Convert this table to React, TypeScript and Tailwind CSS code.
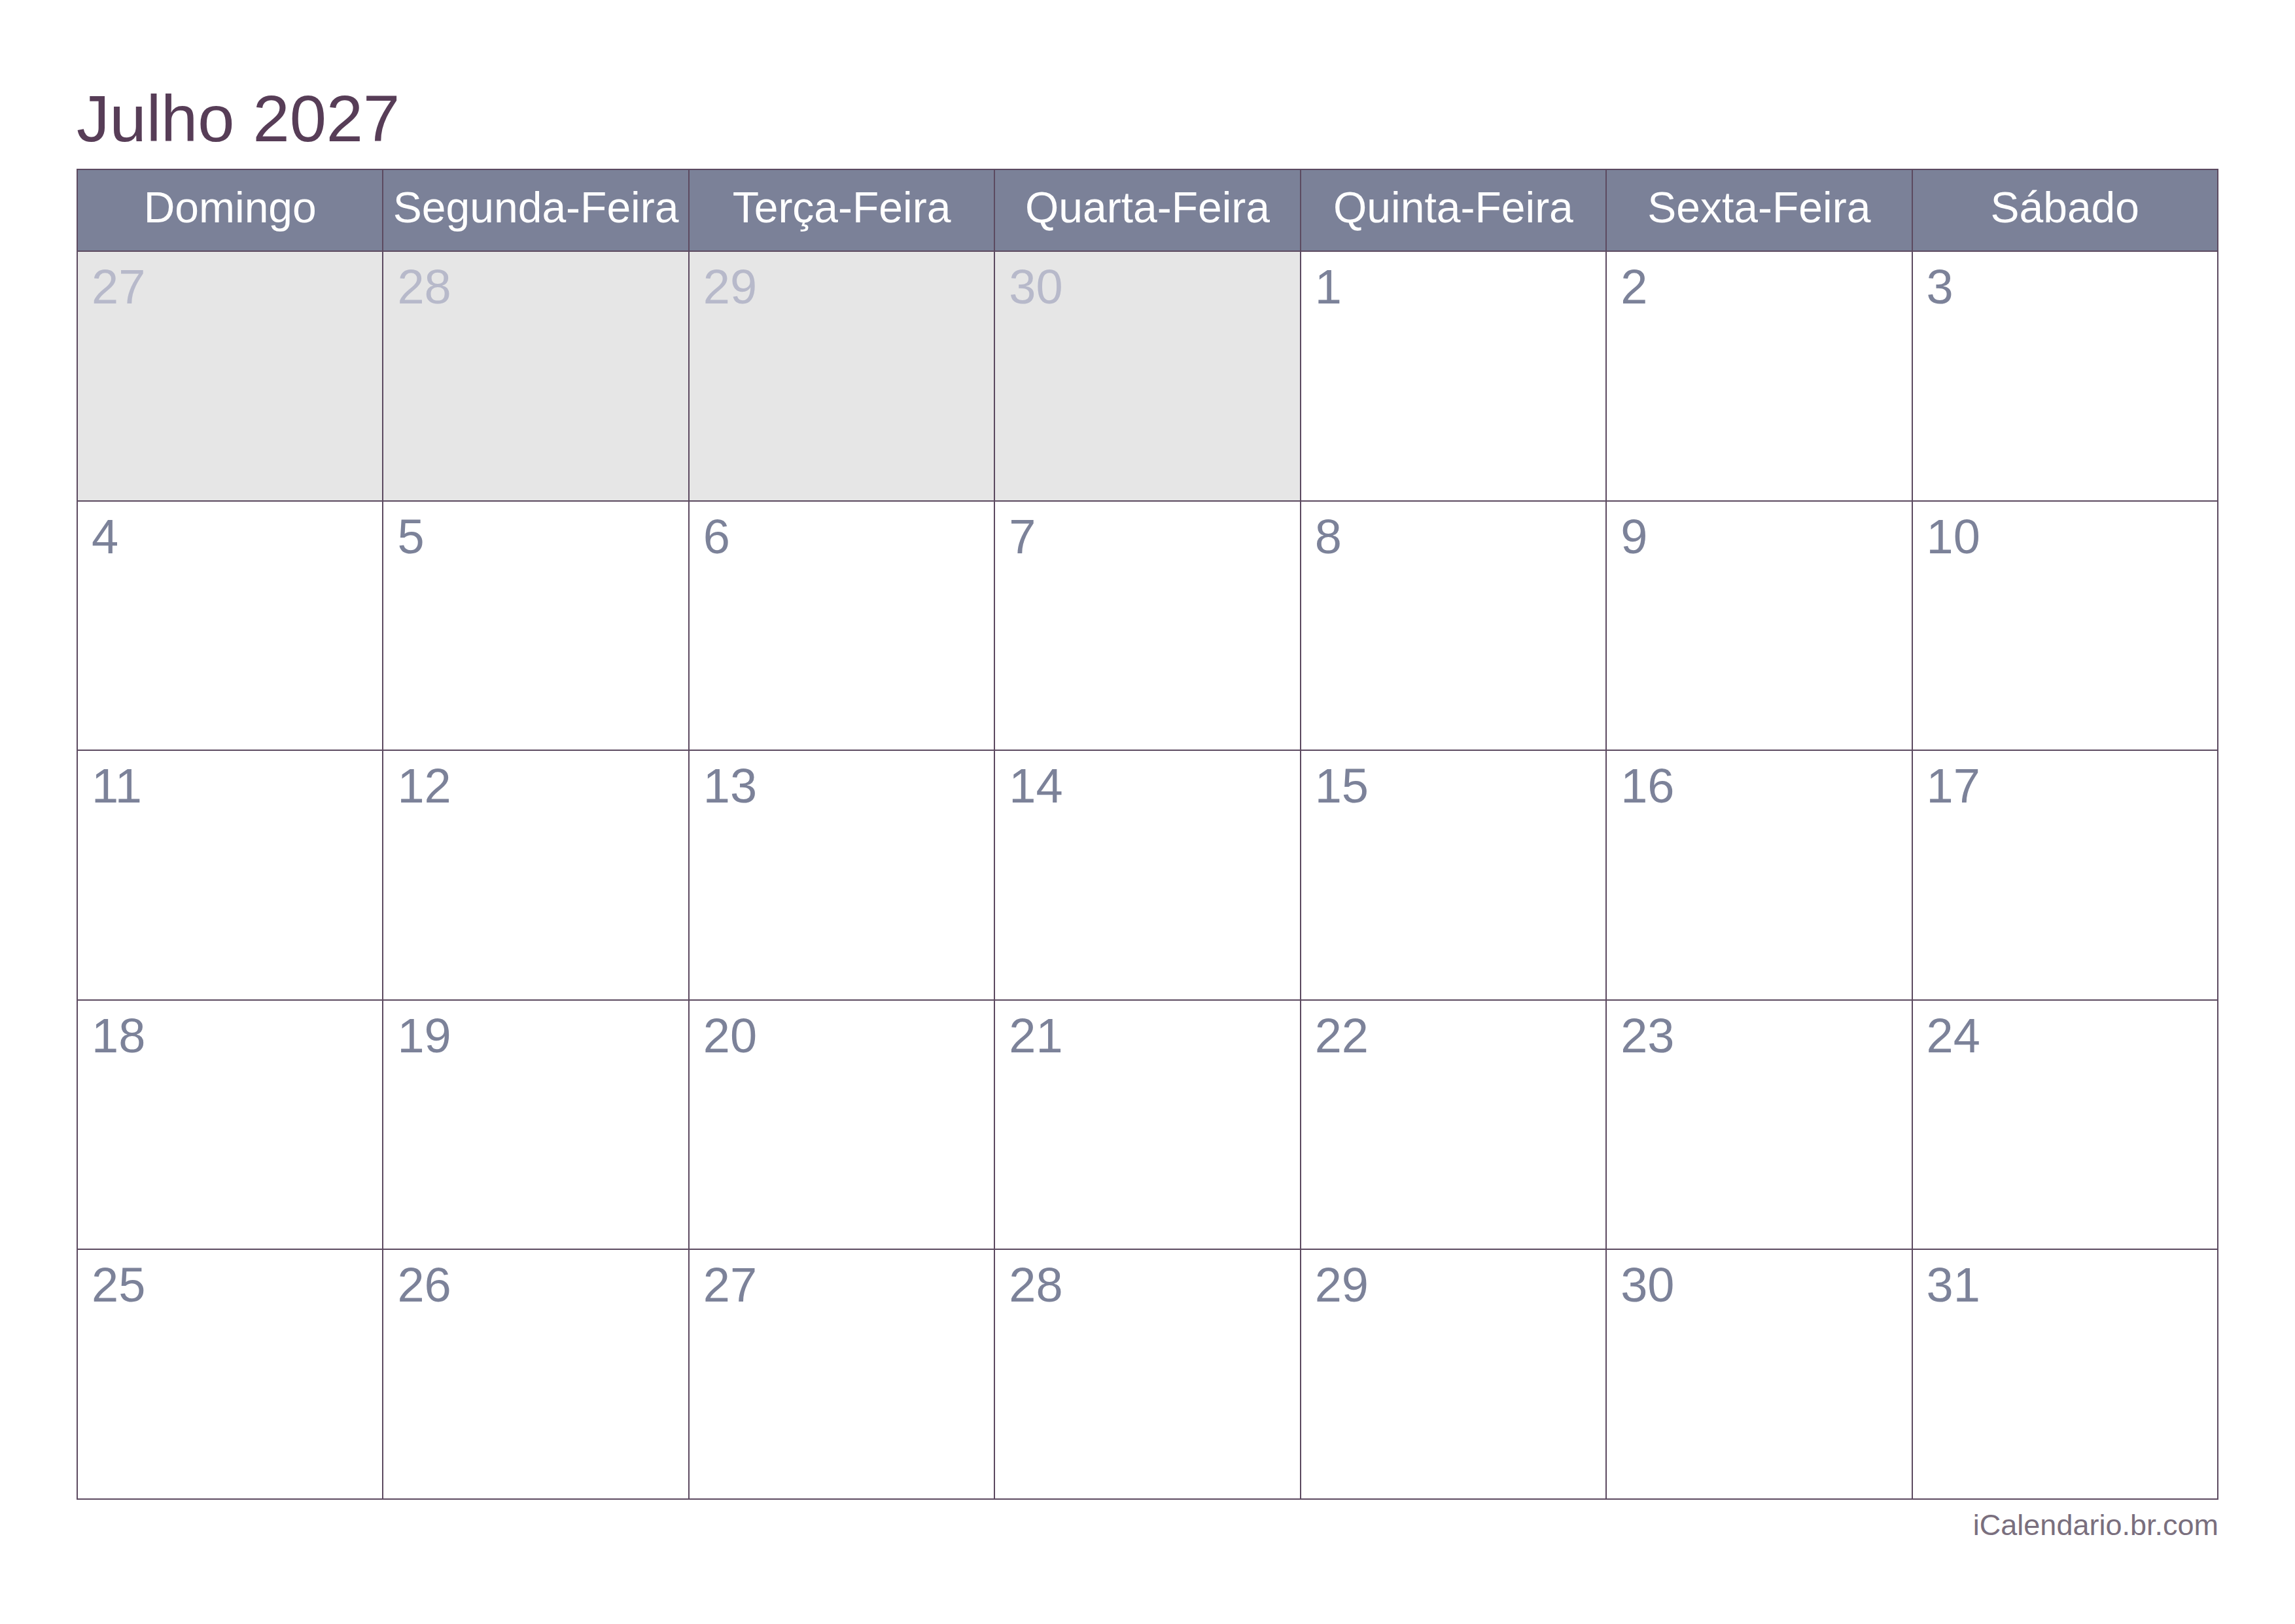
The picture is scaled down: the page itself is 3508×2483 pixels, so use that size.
const weekDays = ["Domingo", "Segunda-Feira", "Terça-Feira", "Quarta-Feira", "Quinta-Feira", "Sexta-Feira", "Sábado"];

// July 2027 starts on a Thursday; the first row carries the tail of June
const cells: { day: number; muted: boolean }[] = [
  ...[27, 28, 29, 30].map((day) => ({ day, muted: true })),
  ...Array.from({ length: 31 }, (_, i) => ({ day: i + 1, muted: false })),
];

export default function App() {
  return (
    <div className="min-h-screen w-full bg-white pl-[117px] pt-[131px]" style={{ fontFamily: '"Liberation Sans", Arial, sans-serif' }}>
      <div className="w-[3274px]">
        <h1 className="text-[101px] leading-none text-[#573d57]">Julho 2027</h1>

        <div className="mt-[26px] grid grid-cols-7 grid-rows-[123px_repeat(5,379.6px)] gap-[2px] bg-[#5c4a60] p-[2px]">
          {weekDays.map((d) => (
            <div key={d} className="bg-[#7b8198] pt-[24px] text-center text-[66px] leading-none text-white whitespace-nowrap">
              {d}
            </div>
          ))}
          {cells.map((c, i) => (
            <div key={i} className={c.muted ? "bg-[#e6e6e6] pl-[21px] pt-[17px]" : "bg-white pl-[21px] pt-[17px]"}>
              <span className={c.muted ? "text-[74px] leading-none text-[#b7b9ca]" : "text-[74px] leading-none text-[#7c8299]"}>
                {c.day}
              </span>
            </div>
          ))}
        </div>

        <p className="mt-[16px] text-right text-[45px] leading-none text-[#7a6f7e]">iCalendario.br.com</p>
      </div>
    </div>
  );
}
